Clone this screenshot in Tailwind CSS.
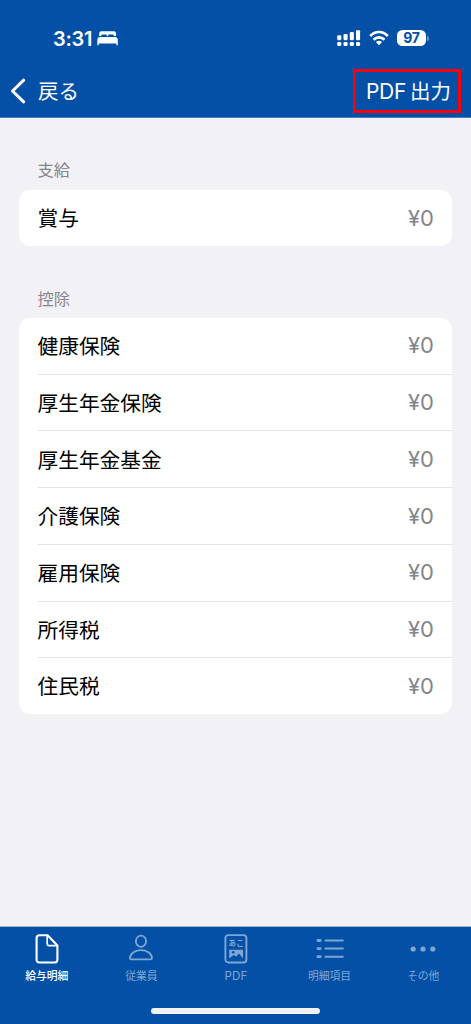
<!DOCTYPE html>
<html lang="ja">
<head>
<meta charset="utf-8">
<meta name="viewport" content="width=device-width, initial-scale=1">
<title>賞与明細</title>
<script src="https://cdn.jsdelivr.net/npm/@tailwindcss/browser@4"></script>
</head>
<body class="bg-[#f2f1f6]">
<div class="flex h-[1024px] w-[471px] flex-col overflow-hidden bg-[#f2f1f6] font-['Inter','Noto_Sans_CJK_JP',sans-serif] text-black">
  <header class="h-[118px] shrink-0 border-b border-[#4a7dbd] bg-[#0350a6] text-white">
    <div class="flex h-[65px] items-start pt-[28px] pl-[53px] pr-[42px]">
      <span class="pt-px text-[20px] leading-[21px] font-semibold tracking-[-0.3px]">3:31</span>
      <svg class="mt-[3px] ml-[5px]" width="21" height="15" viewBox="0 0 21 15" fill="currentColor">
        <path d="M2.2 5V2.4Q2.2.3 4.3.3H16.9Q19 .3 19 2.4V5H16.8V4.3Q16.8 3.5 16 3.5H12Q11.2 3.5 11.2 4.3V5H9.8V4.3Q9.8 3.5 9 3.5H5.2Q4.4 3.5 4.4 4.3V5Z"/>
        <path d="M3 5.9H18.2Q20.8 6.2 20.8 9V13.7Q20.8 14.4 20.1 14.4Q19.4 14.4 19.4 13.7V12.6H1.7V13.7Q1.7 14.4 1 14.4Q.3 14.4.3 13.7V9Q.3 6.2 3 5.9Z"/>
      </svg>
      <svg class="mt-[2px] ml-auto" width="24" height="17" viewBox="0 0 24 17" fill="currentColor">
        <rect x="0.2" y="5.2" width="4.1" height="5" rx="1.1"/><rect x="6.5" y="3.9" width="4.1" height="6.3" rx="1.1"/><rect x="12.8" y="2.1" width="4.1" height="8.1" rx="1.1"/><rect x="19" y="0.2" width="4.1" height="10" rx="1.1"/>
        <rect x="0.2" y="11.9" width="4.1" height="4.1" rx="1.3"/><rect x="6.5" y="11.9" width="4.1" height="4.1" rx="1.3"/><rect x="12.8" y="11.9" width="4.1" height="4.1" rx="1.3"/><rect x="19" y="11.9" width="4.1" height="4.1" rx="1.3"/>
      </svg>
      <svg class="mt-[2px] ml-[8px]" width="20" height="16" viewBox="0 0 20 16" fill="none" stroke="currentColor" stroke-width="2.7">
        <path d="M1.2 6Q5 2 10 2T18.8 6"/><path d="M4.5 9.8Q7 7.3 10 7.3T15.5 9.8"/><path d="M6.9 12.1Q8.4 10.8 10 10.8T13.1 12.1L10 15.2Z" fill="currentColor" stroke="none"/>
      </svg>
      <div class="mt-[2px] ml-[8px] flex items-center">
        <span class="flex h-4 w-[29px] items-center justify-center rounded-[5.5px] bg-white text-[14px] leading-4 font-bold tracking-[-0.2px] text-[#0350a6]">97</span>
        <span class="ml-px h-[5px] w-[2px] rounded-r-full bg-[#6c96ca]"></span>
      </div>
    </div>
    <div class="flex h-[52px] items-center justify-between pl-[10px] pr-[10px]">
      <div class="flex items-center">
        <svg width="16" height="26" viewBox="0 0 16 26" fill="none" stroke="currentColor" stroke-width="3" stroke-linecap="round" stroke-linejoin="round"><path d="M13.7 2.2L2.5 13L13.7 23.8"/></svg>
        <span class="ml-[12px] pt-[2px] text-[20.5px] leading-6">戻る</span>
      </div>
      <div class="flex h-[44px] w-[108px] items-center justify-center border-[3px] border-[#fb0007] whitespace-nowrap"><span class="pt-[2px] pl-[3px] text-[21px] leading-6 tracking-[-0.3px]">PDF<span class="ml-[4px] text-[20.5px] tracking-normal">出力</span></span></div>
    </div>
  </header>

  <main class="flex-1 px-[19px]">
    <h2 class="mt-[40px] h-[32px] pl-[18.5px] text-[16.3px] leading-6 text-[#85858a]">支給</h2>
    <div class="flex h-[56px] items-center justify-between rounded-[11px] bg-white pr-[18px] pl-[18.5px] text-[20.7px]">
      <span class="pt-[2px]">賞与</span><span class="text-[22px] text-[#858589]">¥0</span>
    </div>
    <h2 class="mt-[40px] h-[32px] pt-px pl-[18.5px] text-[16.3px] leading-6 text-[#85858a]">控除</h2>
    <ul class="flex h-[396px] flex-col overflow-hidden rounded-[11px] bg-white pl-[18.5px] text-[20.7px]">
      <li class="flex flex-1 items-center justify-between border-b border-[#e4e4e6] pr-[18px]"><span class="pt-[2px]">健康保険</span><span class="text-[22px] text-[#858589]">¥0</span></li>
      <li class="flex flex-1 items-center justify-between border-b border-[#e4e4e6] pr-[18px]"><span class="pt-[2px]">厚生年金保険</span><span class="text-[22px] text-[#858589]">¥0</span></li>
      <li class="flex flex-1 items-center justify-between border-b border-[#e4e4e6] pr-[18px]"><span class="pt-[2px]">厚生年金基金</span><span class="text-[22px] text-[#858589]">¥0</span></li>
      <li class="flex flex-1 items-center justify-between border-b border-[#e4e4e6] pr-[18px]"><span class="pt-[2px]">介護保険</span><span class="text-[22px] text-[#858589]">¥0</span></li>
      <li class="flex flex-1 items-center justify-between border-b border-[#e4e4e6] pr-[18px]"><span class="pt-[2px]">雇用保険</span><span class="text-[22px] text-[#858589]">¥0</span></li>
      <li class="flex flex-1 items-center justify-between border-b border-[#e4e4e6] pr-[18px]"><span class="pt-[2px]">所得税</span><span class="text-[22px] text-[#858589]">¥0</span></li>
      <li class="flex flex-1 items-center justify-between pr-[18px]"><span class="pt-px">住民税</span><span class="text-[22px] text-[#858589]">¥0</span></li>
    </ul>
  </main>

  <footer class="flex h-[98px] shrink-0 flex-col border-t border-[#9fb0cb] bg-[#0350a6]">
    <nav class="flex h-[60px] pr-px text-[10.8px] leading-4 text-[#7fa6d3]">
      <div class="flex flex-1 flex-col items-center pt-[6px] pr-px font-medium text-white">
        <svg width="24" height="32" viewBox="0 0 24 32" fill="none" stroke="currentColor" stroke-width="2.1" stroke-linejoin="round"><path d="M4.6 2.2H12.6L22.4 12.4V26.4Q22.4 29.5 19.4 29.5H4.6Q1.6 29.5 1.6 26.4V5.2Q1.6 2.2 4.6 2.2Z"/><path d="M12.2 2.4V11Q12.2 12.6 13.8 12.6H22.3" stroke-width="1.7"/></svg>
        <span class="mt-[4px]">給与明細</span>
      </div>
      <div class="flex flex-1 flex-col items-center pt-[6px] pr-px">
        <svg width="24" height="32" viewBox="0 0 24 32" fill="none" stroke="currentColor" stroke-width="1.8" stroke-linejoin="round"><ellipse cx="12" cy="8.2" rx="5.1" ry="5.6"/><path d="M2.4 26.4Q1 26.4 1 25C1.4 20 6.4 17.2 12 17.2S22.6 20 23 25Q23 26.4 21.6 26.4Z"/></svg>
        <span class="mt-[4px]">従業員</span>
      </div>
      <div class="flex flex-1 flex-col items-center pt-[6px]">
        <svg width="24" height="32" viewBox="0 0 24 32" fill="none" stroke="currentColor" stroke-width="1.9"><rect x="1.4" y="2.1" width="21" height="27.4" rx="3"/><text x="4.6" y="13.2" class="font-['Noto_Sans_CJK_JP',sans-serif] text-[7.6px] font-bold" fill="currentColor" stroke="none">あこ</text><path d="M5.2 16.7H19V25.4L15 20.5L12 23.4L9.6 22.1L5.2 25.5Z" fill="currentColor" stroke="none"/><circle cx="9.2" cy="19.2" r="1.3" class="fill-[#0350a6]" stroke="none"/></svg>
        <span class="mt-[3px] text-[11.5px] tracking-[0.2px]">PDF</span>
      </div>
      <div class="flex flex-1 flex-col items-center pt-[6px]">
        <svg width="28" height="32" viewBox="0 0 28 32" fill="none" stroke="currentColor" stroke-linecap="round"><path d="M1.9 7.5H4.2M1.9 15.6H4.2M1.9 23.7H4.2" stroke-width="2.8"/><path d="M9.5 7.5H26.8M9.5 15.6H26.8M9.5 23.7H26.8" stroke-width="2"/></svg>
        <span class="mt-[4px]">明細項目</span>
      </div>
      <div class="flex flex-1 flex-col items-center pt-[6px]">
        <svg width="26" height="32" viewBox="0 0 26 32" fill="currentColor"><circle cx="3.2" cy="16" r="2.6"/><circle cx="13" cy="16" r="2.6"/><circle cx="22.8" cy="16" r="2.6"/></svg>
        <span class="mt-[4px]">その他</span>
      </div>
    </nav>
    <div class="mx-auto mt-[21px] h-[6px] w-[169px] rounded-full bg-[#f2f1f3]"></div>
  </footer>
</div>
</body>
</html>
